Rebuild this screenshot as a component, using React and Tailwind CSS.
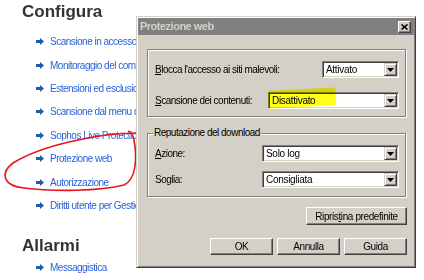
import React from "react";

const links = [
  "Scansione in accesso",
  "Monitoraggio del computer",
  "Estensioni ed esclusioni",
  "Scansione dal menu di scelta rapida",
  "Sophos Live Protection",
  "Protezione web",
  "Autorizzazione",
  "Diritti utente per Gestione dispositivi",
];

function BlueArrow() {
  return (
    <svg width="8" height="7" viewBox="0 0 8 7" className="shrink-0">
      <path d="M0 2h4V0l4 3.5L4 7V5H0z" fill="#1d5ea8" />
    </svg>
  );
}

function LinkRow({ label }) {
  return (
    <div className="flex h-[23.4px] items-center gap-[6px] pl-[36px]">
      <BlueArrow />
      <span className="whitespace-nowrap text-[10px] tracking-[-0.5px] text-[#2a62d8]">{label}</span>
    </div>
  );
}

function Combo({ value, className }) {
  return (
    <div
      className={`flex h-[17px] border border-t-[#808080] border-l-[#808080] border-r-white border-b-white bg-white shadow-[inset_1px_1px_0_#404040,inset_-1px_-1px_0_#d4d0c8] ${className}`}
    >
      <span className="flex-1 pl-[3px] pt-[1px] text-[10px] leading-[14px] tracking-[-0.3px]">{value}</span>
      <div className="m-[1px] flex w-[13px] items-center justify-center border border-t-[#d4d0c8] border-l-[#d4d0c8] border-r-[#404040] border-b-[#404040] bg-[#d4d0c8] shadow-[inset_1px_1px_0_white,inset_-1px_-1px_0_#808080]">
        <svg width="7" height="4" viewBox="0 0 7 4">
          <path d="M0 0h7L3.5 4z" fill="#000" />
        </svg>
      </div>
    </div>
  );
}

function Btn({ children, className }) {
  return (
    <div
      className={`flex items-center justify-center border border-t-white border-l-white border-r-[#404040] border-b-[#404040] shadow-[inset_-1px_-1px_0_#808080] text-[10px] tracking-[-0.4px] ${className}`}
    >
      {children}
    </div>
  );
}

export default function App() {
  return (
    <div className="relative h-[280px] w-[424px] overflow-hidden bg-white font-['Liberation_Sans',sans-serif]">
      {/* page behind */}
      <div className="flex flex-col">
        <div className="h-[30px] pl-[22px] pt-[3px]">
          <h1 className="text-[17px] font-bold leading-[17px] text-[#333]">Configura</h1>
        </div>
        {links.map((l) => (
          <LinkRow key={l} label={l} />
        ))}
        <h2 className="mt-[19.5px] h-[17px] pl-[22px] text-[17px] font-bold leading-[17px] text-[#333]">
          Allarmi
        </h2>
        <div className="mt-[2.6px]">
          <LinkRow label="Messaggistica" />
        </div>
      </div>

      {/* red hand-drawn circle */}
      <svg className="pointer-events-none absolute left-0 top-0" width="424" height="280" viewBox="0 0 424 280">
        <path
          d="M137 133 C100 133, 42 145, 13 163 C-1 174, 4 186, 24 188 C55 192, 100 191, 124 185 C137 179, 137 156, 134 140 C133 135, 131 132, 128 131"
          fill="none"
          stroke="#e8141c"
          strokeWidth="1.6"
        />
      </svg>

      {/* dialog */}
      <div className="absolute left-[136px] top-[16px] flex h-[252px] w-[280px] flex-col border border-t-[#d4d0c8] border-l-[#d4d0c8] border-r-[#404040] border-b-[#404040] bg-[#d4d0c8] p-[1px] shadow-[inset_1px_1px_0_white,inset_-1px_-1px_0_#808080]">
        <div className="flex h-[17px] items-center justify-between bg-[#808080] pl-[2px] pr-[3px]">
          <span className="text-[11px] font-bold tracking-[-0.5px] text-[#d4d0c8]">Protezione web</span>
          <div className="flex h-[12px] w-[13px] items-center justify-center border border-t-white border-l-white border-r-[#404040] border-b-[#404040] bg-[#d4d0c8] shadow-[inset_-1px_-1px_0_#808080]">
            <svg width="7" height="6" viewBox="0 0 7 6">
              <path d="M0.5 0.5L6.5 5.5M6.5 0.5L0.5 5.5" stroke="#000" strokeWidth="1.6" />
            </svg>
          </div>
        </div>

        <div className="flex flex-col pl-[9px] text-[10px] tracking-[-0.5px] text-black">
          {/* group 1 */}
          <div className="mt-[14px] flex h-[68px] w-[259px] flex-col gap-[14px] border border-[#808080] pl-[7px] pr-[6px] pt-[11px] shadow-[1px_1px_0_white,inset_1px_1px_0_white]">
            <div className="flex h-[17px] items-center justify-between">
              <span><u>B</u>locca l'accesso ai siti malevoli:</span>
              <Combo value="Attivato" className="w-[77px]" />
            </div>
            <div className="relative flex h-[17px] items-center justify-between">
              <span><u>S</u>cansione dei contenuti:</span>
              <Combo value="Disattivato" className="w-[131px]" />
              <div className="pointer-events-none absolute left-[113px] top-[-3px] h-[18px] w-[68px] -rotate-3 rounded-[3px] bg-[#ffff00] opacity-90 mix-blend-multiply" />
            </div>
          </div>

          {/* group 2 */}
          <div className="relative mt-[16px] flex h-[64px] w-[259px] flex-col gap-[9px] border border-[#808080] pl-[7px] pr-[6px] pt-[11px] shadow-[1px_1px_0_white,inset_1px_1px_0_white]">
            <span className="absolute left-[5px] top-[-8px] bg-[#d4d0c8] px-[1px] leading-[14px]">Reputazione del download</span>
            <div className="flex h-[17px] items-center justify-between">
              <span><u>A</u>zione:</span>
              <Combo value="Solo log" className="w-[137px]" />
            </div>
            <div className="flex h-[17px] items-center justify-between">
              <span>So<u>g</u>lia:</span>
              <Combo value="Consigliata" className="w-[137px]" />
            </div>
          </div>

          <div className="mt-[10px] flex w-[260px] justify-end">
            <Btn className="h-[18px] w-[101px]">Ripris<u>t</u>ina predefinite</Btn>
          </div>
          <div className="mt-[13px] flex w-[260px] justify-end gap-[4px]">
            <Btn className="h-[17px] w-[63px]">OK</Btn>
            <Btn className="h-[17px] w-[63px]">Annulla</Btn>
            <Btn className="h-[17px] w-[63px]">Guida</Btn>
          </div>
        </div>
      </div>
    </div>
  );
}
